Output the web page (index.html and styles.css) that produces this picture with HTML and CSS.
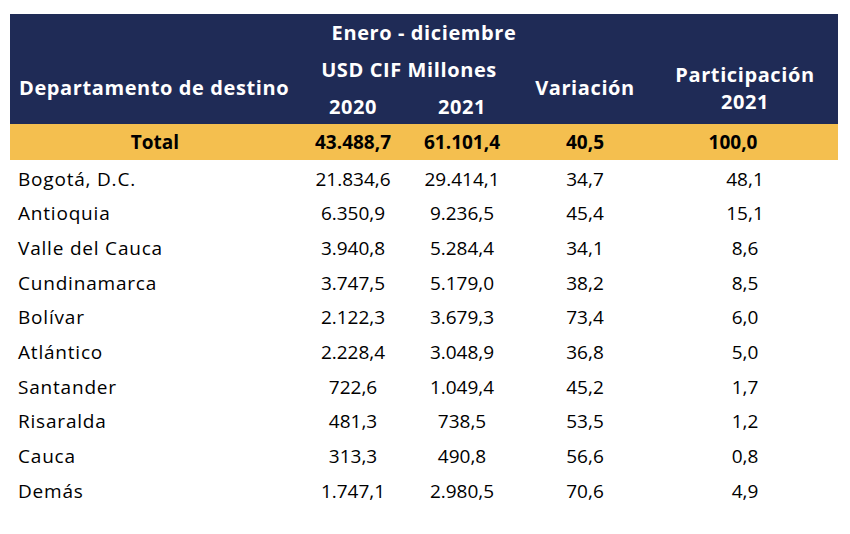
FILE: index.html
```html
<!DOCTYPE html>
<html lang="es">
<head>
<meta charset="utf-8">
<title>Importaciones por departamento</title>
<link rel="stylesheet" href="styles.css">
</head>
<body>
<table class="tbl">
  <colgroup>
    <col class="c1"><col class="c2"><col class="c3"><col class="c4"><col class="c5">
  </colgroup>
  <thead>
    <tr class="h1">
      <th></th>
      <th colspan="2" class="enero">Enero - diciembre</th>
      <th></th>
      <th></th>
    </tr>
    <tr class="h2">
      <th rowspan="2" class="left">Departamento de destino</th>
      <th colspan="2">USD CIF Millones</th>
      <th rowspan="2">Variación</th>
      <th rowspan="2" class="part">Participación<br>2021</th>
    </tr>
    <tr class="h3">
      <th>2020</th>
      <th>2021</th>
    </tr>
  </thead>
  <tbody>
    <tr class="total">
      <td>Total</td><td>43.488,7</td><td>61.101,4</td><td>40,5</td><td class="tp">100,0</td>
    </tr>
    <tr><td class="left">Bogotá, D.C.</td><td>21.834,6</td><td>29.414,1</td><td>34,7</td><td>48,1</td></tr>
    <tr><td class="left">Antioquia</td><td>6.350,9</td><td>9.236,5</td><td>45,4</td><td>15,1</td></tr>
    <tr><td class="left">Valle del Cauca</td><td>3.940,8</td><td>5.284,4</td><td>34,1</td><td>8,6</td></tr>
    <tr><td class="left">Cundinamarca</td><td>3.747,5</td><td>5.179,0</td><td>38,2</td><td>8,5</td></tr>
    <tr><td class="left">Bolívar</td><td>2.122,3</td><td>3.679,3</td><td>73,4</td><td>6,0</td></tr>
    <tr><td class="left">Atlántico</td><td>2.228,4</td><td>3.048,9</td><td>36,8</td><td>5,0</td></tr>
    <tr><td class="left">Santander</td><td>722,6</td><td>1.049,4</td><td>45,2</td><td>1,7</td></tr>
    <tr><td class="left">Risaralda</td><td>481,3</td><td>738,5</td><td>53,5</td><td>1,2</td></tr>
    <tr><td class="left">Cauca</td><td>313,3</td><td>490,8</td><td>56,6</td><td>0,8</td></tr>
    <tr><td class="left">Demás</td><td>1.747,1</td><td>2.980,5</td><td>70,6</td><td>4,9</td></tr>
  </tbody>
</table>
</body>
</html>
```

FILE: styles.css
```css
html, body {
  margin: 0;
  padding: 0;
  background: #ffffff;
}
body {
  padding: 14px 0 0 10px;
  font-family: "Open Sans", "DejaVu Sans", sans-serif;
  color: #000000;
}
.tbl {
  border-collapse: collapse;
  table-layout: fixed;
  width: 828px;
}
.c1 { width: 290px; }
.c2 { width: 106px; }
.c3 { width: 112px; }
.c4 { width: 134px; }
.c5 { width: 186px; }

.tbl th, .tbl td {
  padding: 0;
  text-align: center;
  white-space: nowrap;
}
thead th {
  background: #1f2b56;
  color: #ffffff;
  font-weight: 700;
  font-size: 20px;
  letter-spacing: 0.6px;
  line-height: 27px;
}
thead .h1 th { height: 36px; }
thead .h2 th { height: 38px; }
thead .h3 th { height: 36px; }
thead th.enero { padding-left: 30px; }
thead th.left {
  text-align: left;
  padding-left: 9px;
}
thead th.part { padding-top: 2px; }

.total td {
  background: #f4bf4f;
  font-weight: 700;
  font-size: 19px;
  height: 36px;
}
.total td.tp { padding-right: 24px; }

tbody tr:not(.total) td {
  font-size: 19px;
  height: 34.67px;
  padding-top: 3px;
  box-sizing: border-box;
}
tbody td.left {
  text-align: left;
  padding-left: 8px;
  font-size: 20px;
  letter-spacing: 0.8px;
}
```
